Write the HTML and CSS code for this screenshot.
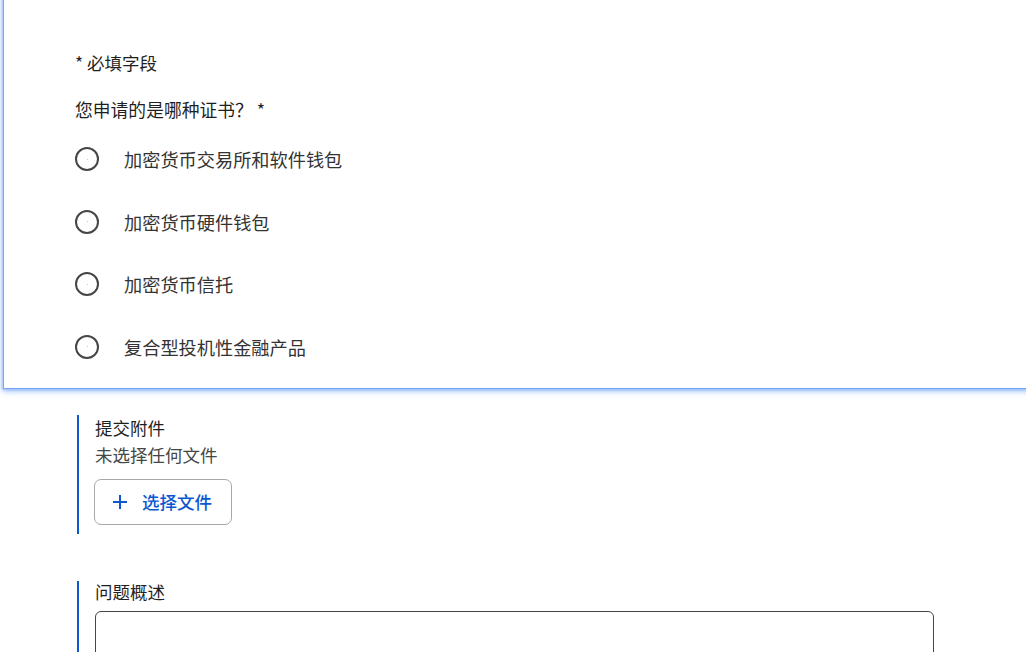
FILE: index.html
```html
<!DOCTYPE html>
<html lang="zh-CN">
<head>
<meta charset="utf-8">
<title>证书申请</title>
<link rel="stylesheet" href="styles.css">
</head>
<body>
<div class="page">
  <div class="card">
    <p class="required-note">* 必填字段</p>
    <p class="question">您申请的是哪种证书？ *</p>
    <div class="options">
      <label class="option"><span class="radio"><span class="dot"></span></span><span class="option-text">加密货币交易所和软件钱包</span></label>
      <label class="option"><span class="radio"><span class="dot"></span></span><span class="option-text">加密货币硬件钱包</span></label>
      <label class="option"><span class="radio"><span class="dot"></span></span><span class="option-text">加密货币信托</span></label>
      <label class="option"><span class="radio"><span class="dot"></span></span><span class="option-text">复合型投机性金融产品</span></label>
    </div>
  </div>

  <div class="field field-attach">
    <div class="field-label">提交附件</div>
    <div class="field-status">未选择任何文件</div>
    <button class="file-btn" type="button">
      <svg class="plus" width="16" height="16" viewBox="0 0 16 16"><path d="M8 1v14M1 8h14" stroke="#0b57d0" stroke-width="2" fill="none"/></svg>
      <span>选择文件</span>
    </button>
  </div>

  <div class="field field-desc">
    <div class="field-label small">问题概述</div>
    <div class="textarea"></div>
  </div>
</div>
</body>
</html>
```

FILE: styles.css
```css
html, body {
  margin: 0;
  padding: 0;
  overflow: hidden;
  background: #ffffff;
}
body {
  font-family: "Noto Sans CJK SC", "Noto Sans", "Liberation Sans", sans-serif;
  color: #1f1f1f;
}
.page {
  width: 1026px;
  height: 652px;
  overflow: hidden;
}
.card {
  margin: -20px -40px 0 3px;
  padding: 70px 0 17px 71px;
  border: 1px solid #74a6f6;
  background: #fff;
  box-shadow: 0 0 3px 1px rgba(66, 133, 244, 0.45), 0 3px 6px rgba(66, 133, 244, 0.35);
}
.required-note {
  margin: 0;
  font-size: 17.5px;
  line-height: 24px;
  color: #1f1f1f;
}
.question {
  margin: 22px 0 0;
  font-size: 17.8px;
  line-height: 24px;
  color: #1f1f1f;
}
.options {
  margin-top: 14px;
  display: flex;
  flex-direction: column;
  gap: 14.5px;
}
.option {
  height: 48px;
  display: flex;
  align-items: center;
  gap: 25px;
}
.radio {
  width: 20px;
  height: 20px;
  border: 2px solid #444746;
  border-radius: 50%;
  display: flex;
  align-items: center;
  justify-content: center;
  flex: none;
}
.dot {
  width: 1px;
  height: 1px;
  background: #b9c8ee;
}
.option-text {
  font-size: 18.2px;
  line-height: 24px;
  color: #333;
}
.field {
  margin-left: 77px;
  border-left: 2px solid #0b57d0;
  padding-left: 16px;
}
.field-attach {
  margin-top: 26px;
  padding-bottom: 9px;
}
.field-label {
  font-size: 17.5px;
  line-height: 26px;
  color: #1f1f1f;
}
.field-status {
  margin-top: 1px;
  font-size: 17.5px;
  line-height: 26px;
  color: #444746;
}
.file-btn {
  margin-top: 11px;
  margin-left: -1px;
  height: 46px;
  box-sizing: border-box;
  padding: 0 19px 0 17px;
  display: flex;
  align-items: center;
  gap: 14px;
  background: #fff;
  border: 1px solid #a8a8a8;
  border-radius: 7px;
  font-family: inherit;
  font-size: 17.5px;
  font-weight: 500;
  color: #0b57d0;
}
.plus {
  flex: none;
}
.field-desc {
  margin-top: 47px;
  height: 100px;
}
.field-label.small {
  line-height: 22px;
}
.textarea {
  margin-top: 8px;
  width: 839px;
  height: 120px;
  box-sizing: border-box;
  border: 1px solid #444746;
  border-radius: 6px;
}
```
